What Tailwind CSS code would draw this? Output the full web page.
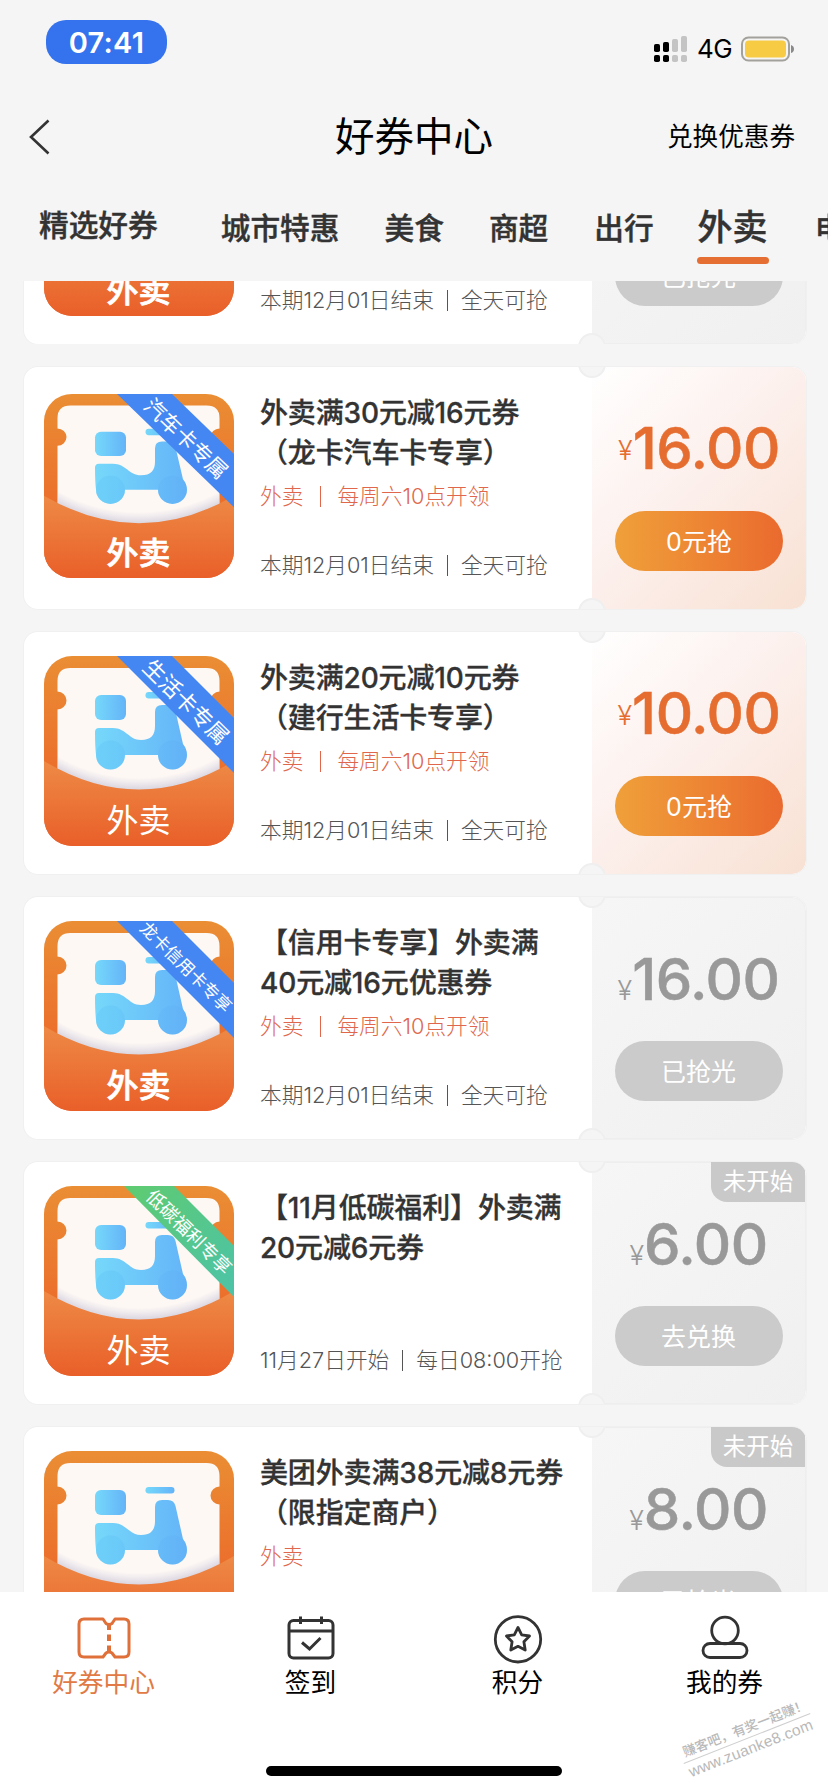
<!DOCTYPE html>
<html lang="zh-CN">
<head>
<meta charset="utf-8">
<title>好券中心</title>
<script src="https://cdn.jsdelivr.net/npm/@tailwindcss/browser@4"></script>
</head>
<body class="relative w-[828px] h-[1792px] overflow-hidden bg-[#f5f5f5] font-[Inter,'Noto_Sans_CJK_SC',sans-serif] text-[#333]">

<!-- shared gradients and the delivery artwork -->
<svg width="0" height="0" class="absolute">
  <defs>
    <linearGradient id="frame" x1="0" y1="0" x2="0" y2="1"><stop offset="0" stop-color="#ea8e34"/><stop offset="1" stop-color="#ec5a26"/></linearGradient>
    <linearGradient id="pocket" x1="0" y1="0" x2="0" y2="1"><stop offset="0" stop-color="#ee8a45"/><stop offset="1" stop-color="#e95f29"/></linearGradient>
    <linearGradient id="bike" x1="0" y1="0" x2="1" y2="0"><stop offset="0" stop-color="#76d8fa"/><stop offset="1" stop-color="#64b4f8"/></linearGradient>
    <linearGradient id="green" x1="0" y1="0" x2="1" y2="1"><stop offset="0" stop-color="#5fcb70"/><stop offset="1" stop-color="#4cc3a8"/></linearGradient>
    <radialGradient id="shade" gradientUnits="userSpaceOnUse" cx="95" cy="-40" r="174"><stop offset="0.93" stop-color="#c9c4dd" stop-opacity="0"/><stop offset="1" stop-color="#c0bcd0" stop-opacity="0.6"/></radialGradient>
    <clipPath id="round"><rect width="190" height="190" rx="28"/></clipPath>
    <g id="art">
      <rect width="190" height="190" fill="url(#frame)"/>
      <path d="M13.500 25Q13.500 12 26.500 12H162.500Q175.500 12 175.500 25V35.500A9 9 0 0 0 175.500 53.500V140H13.500V53.500A9 9 0 0 0 13.500 35.500Z" fill="#fdf8f4"/>
      <path d="M13.500 90H175.500V140H13.500Z" fill="url(#shade)"/>
      <rect x="51" y="39" width="31" height="25" rx="6" fill="url(#bike)"/>
      <rect x="101.500" y="36" width="29" height="6.500" rx="3.200" fill="url(#bike)"/>
      <path d="M51 76Q51 72 55 72H69C82 72 85 84 97 84C107 84 111 79 111 70V56Q111 49 118 49H124Q130 49 131.500 55L139 88Q143 93 143 99A14.500 14.500 0 0 1 114 99H81A14.500 14.500 0 0 1 52 99Q51 90 51 76Z" fill="url(#bike)"/>
      <circle cx="128.500" cy="99" r="14.500" fill="#58a8f7" opacity=".2"/>
      <circle cx="66.500" cy="99" r="14.500" fill="#58bdf7" opacity=".25"/>
      <path d="M0 105Q95 162 190 105V190H0Z" fill="url(#pocket)"/>
    </g>
  </defs>
</svg>

<header class="flex h-[281px] flex-col overflow-hidden">
  <div class="flex h-[84px] items-start justify-between pl-[46px] pr-[34px] pt-5">
    <div class="flex h-11 w-[121px] items-center justify-center rounded-[20px] bg-[#3572ee] pt-px text-[29px] font-semibold tracking-[0.3px] text-white">07:41</div>
    <div class="flex items-center pt-[15px]">
      <svg class="-mt-[1px]" width="34" height="28" viewBox="0 0 34 28">
        <g fill="#000"><rect x="0" y="9" width="6" height="8" rx="1.800"/><rect x="9" y="7" width="6" height="10" rx="1.800"/><rect x="0" y="20" width="6" height="7" rx="1.800"/><rect x="9" y="20" width="6" height="7" rx="1.800"/></g>
        <g fill="#c4c4c4"><rect x="18" y="4" width="6" height="13" rx="1.800"/><rect x="27" y="1" width="6" height="16" rx="1.800"/><rect x="18" y="20" width="6" height="7" rx="1.800"/><rect x="27" y="20" width="6" height="7" rx="1.800"/></g>
      </svg>
      <span class="ml-[9px] w-[43px] text-[26px] leading-7 tracking-[-0.5px] text-black">4G</span>
      <svg class="ml-[1px]" width="53" height="26" viewBox="0 0 53 26"><rect x="1" y="1.500" width="47" height="23" rx="6.500" fill="none" stroke="#a3a19c" stroke-width="2"/><rect x="4" y="4.500" width="41" height="17" rx="4" fill="#f7cb43"/><path d="M50 9Q53 10 53 13T50 17Z" fill="#8a8a8a"/></svg>
    </div>
  </div>
  <div class="grid h-[106px] grid-cols-[1fr_168px_1fr] items-center pl-7 pr-[33px]">
    <svg width="23" height="38" viewBox="0 0 23 38" fill="none" stroke="#333" stroke-width="2.600"><path d="M20.500 2.500L3 19L20.500 35.500"/></svg>
    <h1 class="pl-[5px] text-center text-[39.500px] leading-[52px] text-black">好券中心</h1>
    <span class="text-right text-[25.600px] text-black">兑换优惠券</span>
  </div>
  <nav class="flex w-[828px] items-start overflow-hidden whitespace-nowrap pl-[39px] text-[29.700px] font-medium leading-10 [-webkit-text-stroke:0.400px]">
    <span class="mr-[63px] shrink-0 pt-[15px]">精选好券</span>
    <span class="mr-[45px] shrink-0 pt-[18px]">城市特惠</span>
    <span class="mr-[45px] shrink-0 pt-[18px]">美食</span>
    <span class="mr-[46px] shrink-0 pt-[18px]">商超</span>
    <span class="mr-[43px] shrink-0 pt-[18px]">出行</span>
    <span class="mr-[46px] flex w-[72px] shrink-0 flex-col items-center pt-[15px] text-[35px]"><span class="h-[52px] leading-[44px]">外卖</span><i class="h-[7px] w-[72px] rounded-full bg-[#e56f32]"></i></span>
    <span class="shrink-0 pt-[18px]">电影</span>
  </nav>
</header>

<main id="list" class="flex h-[1311px] flex-col gap-[23px] overflow-hidden"></main>

<footer class="flex h-[200px] flex-col items-center justify-between bg-white pb-4">
  <div class="grid w-full grid-cols-4 text-center text-[25.700px] leading-[34px] text-black">
    <div class="flex flex-col items-center pt-[22px] text-[#e17a45]">
      <svg width="56" height="50" viewBox="0 0 56 50" fill="none" stroke="#e0703a" stroke-width="3"><path d="M8 5H27L30 9.500Q33 11.500 36 9.500L39 5H48Q53 5 53 10V38Q53 43 48 43H39L36 39Q33 37 30 39L27 43H8Q3 43 3 38V10Q3 5 8 5Z" stroke-linejoin="round"/><path d="M33 10V16M33 20.500V27M33 31.500V38" stroke-width="4"/></svg>
      <span class="mt-[2px]">好券中心</span>
    </div>
    <div class="flex flex-col items-center pt-[22px]">
      <svg width="56" height="50" viewBox="0 0 56 50" fill="none" stroke="#333" stroke-width="3"><rect x="6" y="6.500" width="44" height="37.500" rx="4.500"/><path d="M6 17H50M17.500 2.500V10M38.500 2.500V10"/><path d="M19 28.500L26.500 35L37.500 24"/></svg>
      <span class="mt-[2px]">签到</span>
    </div>
    <div class="flex flex-col items-center pt-[22px]">
      <svg width="56" height="50" viewBox="0 0 56 50" fill="none" stroke="#333" stroke-width="2.800"><circle cx="28" cy="25.300" r="22.700"/><path d="M28 13.500L31.700 20.800L39.500 22L33.900 27.800L35.200 36L28 32.300L20.800 36L22.100 27.800L16.500 22L24.300 20.800Z" stroke-linejoin="round"/></svg>
      <span class="mt-[2px]">积分</span>
    </div>
    <div class="flex flex-col items-center pt-[22px]">
      <svg width="56" height="50" viewBox="0 0 56 50" fill="none" stroke="#333" stroke-width="2.800"><circle cx="28" cy="16.500" r="13.300"/><rect x="6" y="29.500" width="44" height="14" rx="7"/></svg>
      <span class="mt-[2px]">我的券</span>
    </div>
  </div>
  <div class="h-[10px] w-[296px] rounded-full bg-black"></div>
</footer>

<div class="absolute left-[677px] top-[1719px] flex w-[140px] -rotate-[21.500deg] flex-col items-center whitespace-nowrap text-[#b9b9b9]">
  <span class="border-b border-[#cfcfcf] pl-1 text-[13.300px] font-medium leading-[19px]">赚客吧，有奖一起赚！</span>
  <span class="text-[15.500px] leading-[19px] font-['Liberation_Sans'] tracking-[0.2px]">www.zuanke8.com</span>
</div>

<script>
const bar = '<i class="mx-[13px] inline-block h-[21px] w-px bg-current align-[-3px]"></i>';
const bar2 = '<i class="mx-[16.500px] inline-block h-[21px] w-px bg-current align-[-3px]"></i>';
const end = '本期12月01日结束' + bar + '全天可抢';
const every = '外卖' + bar2 + '每周六10点开领';
const cards = [
  {t: '', sub: '', foot: end, p: '16.00', btn: '已抢光', first: 1, bold: 1},
  {t: '外卖满30元减16元券<br>（龙卡汽车卡专享）', sub: every, foot: end, p: '16.00', btn: '0元抢', on: 1, bold: 1, rib: '汽车卡专属', fs: 21.5, h: 184},
  {t: '外卖满20元减10元券<br>（建行生活卡专享）', sub: every, foot: end, p: '10.00', btn: '0元抢', on: 1, rib: '生活卡专属', fs: 22},
  {t: '【信用卡专享】外卖满<br>40元减16元优惠券', sub: every, foot: end, p: '16.00', btn: '已抢光', bold: 1, rib: '龙卡信用卡专享', fs: 17.2},
  {t: '【11月低碳福利】外卖满<br>20元减6元券', sub: '', foot: '11月27日开始' + bar + '每日08:00开抢', p: '6.00', btn: '去兑换', rib: '低碳福利专享', fs: 18.5, green: 1, tag: 1},
  {t: '美团外卖满38元减8元券<br>（限指定商户）', sub: '外卖', foot: end, p: '8.00', btn: '已抢光', bold: 1, tag: 1},
];
document.getElementById('list').innerHTML = cards.map(c => {
  const h = c.h || 190;
  const ribbon = c.rib ? `<path d="${c.green ? 'M80 0H130L190 60V111Z' : 'M73 0H128L190 62V117Z'}" fill="${c.green ? 'url(#green)' : '#4587f2'}"/>
    <text transform="translate(${c.green ? 145 : 142} 46) rotate(44.500)" text-anchor="middle" y="${c.fs * 0.36}" font-size="${c.fs}" fill="#fff">${c.rib}</text>` : '';
  const card = `<article class="relative ml-6 flex h-[242px] w-[782px] shrink-0 overflow-hidden rounded-[14px] bg-white shadow-[0_0_0_1px_#f0f0f0]">
    <div class="flex w-[568px] pl-5 ${c.h ? 'pt-[27px]' : 'pt-6'}">
      <svg class="shrink-0" width="190" height="${h}" viewBox="0 0 190 190" preserveAspectRatio="none"><g clip-path="url(#round)"><use href="#art"/>${ribbon}
        <text x="94.500" y="175.500" text-anchor="middle" font-size="32" font-weight="${c.bold ? 500 : 400}" fill="#fff" stroke="#fff" stroke-width="${c.bold ? 0.7 : 0}">外卖</text></g></svg>
      <div class="flex flex-1 flex-col whitespace-nowrap pl-[26px] ${c.h ? '-mt-[27px]' : '-mt-6'}">
        <h2 class="h-[114.500px] shrink-0 pt-[25.500px] text-[28px] font-medium leading-10 tracking-[-0.150px] [-webkit-text-stroke:0.300px]">${c.t}</h2>
        <p class="h-[69.500px] shrink-0 text-[21.700px] font-light leading-7 text-[#e0674c]">${c.sub}</p>
        <p class="text-[21.700px] font-light leading-7 text-[#555]">${c.foot}</p>
      </div>
    </div>
    <div class="relative flex w-[214px] flex-col items-center ${c.on ? 'bg-linear-135 from-white via-[#fcefeb] to-[#f8e1d3]' : 'border border-l-0 border-[#eeeeee] bg-linear-135 from-[#f6f6f6] to-[#f0f0f0]'} rounded-r-[14px]">
      <div class="flex h-[144px] shrink-0 items-baseline pt-[45px] leading-[72px] ${c.on ? 'text-[#e66d30]' : 'text-[#999]'}"><span class="relative text-[27px] font-light ${c.on ? '-top-[9px]' : ''}">¥</span><span class="text-[58px] font-medium tracking-[-0.500px] [-webkit-text-stroke:0.500px]">${c.p}</span></div>
      <div class="flex h-[60px] w-[168px] shrink-0 items-center justify-center rounded-full pt-[3px] text-[25px] text-white ${c.on ? 'bg-linear-to-r from-[#efa03a] to-[#ea6a2e]' : 'bg-[#cbcbcb] -mt-px'}">${c.btn}</div>
      ${c.tag ? '<div class="absolute right-0 -top-px flex h-[40px] w-[94px] items-center justify-center rounded-bl-[16px] bg-[#c9c9c9] pb-px text-[23.500px] text-white">未开始</div>' : ''}
    </div>
    <i class="absolute -top-[17px] left-[554px] size-7 rounded-full border-2 border-[#efefef] bg-[#f5f5f5]"></i>
    <i class="absolute -bottom-[17px] left-[554px] size-7 rounded-full border-2 border-[#efefef] bg-[#f5f5f5]"></i>
  </article>`;
  return c.first ? `<div class="flex h-[63px] shrink-0 items-end overflow-hidden">${card}</div>` : card;
}).join('');
</script>
</body>
</html>
